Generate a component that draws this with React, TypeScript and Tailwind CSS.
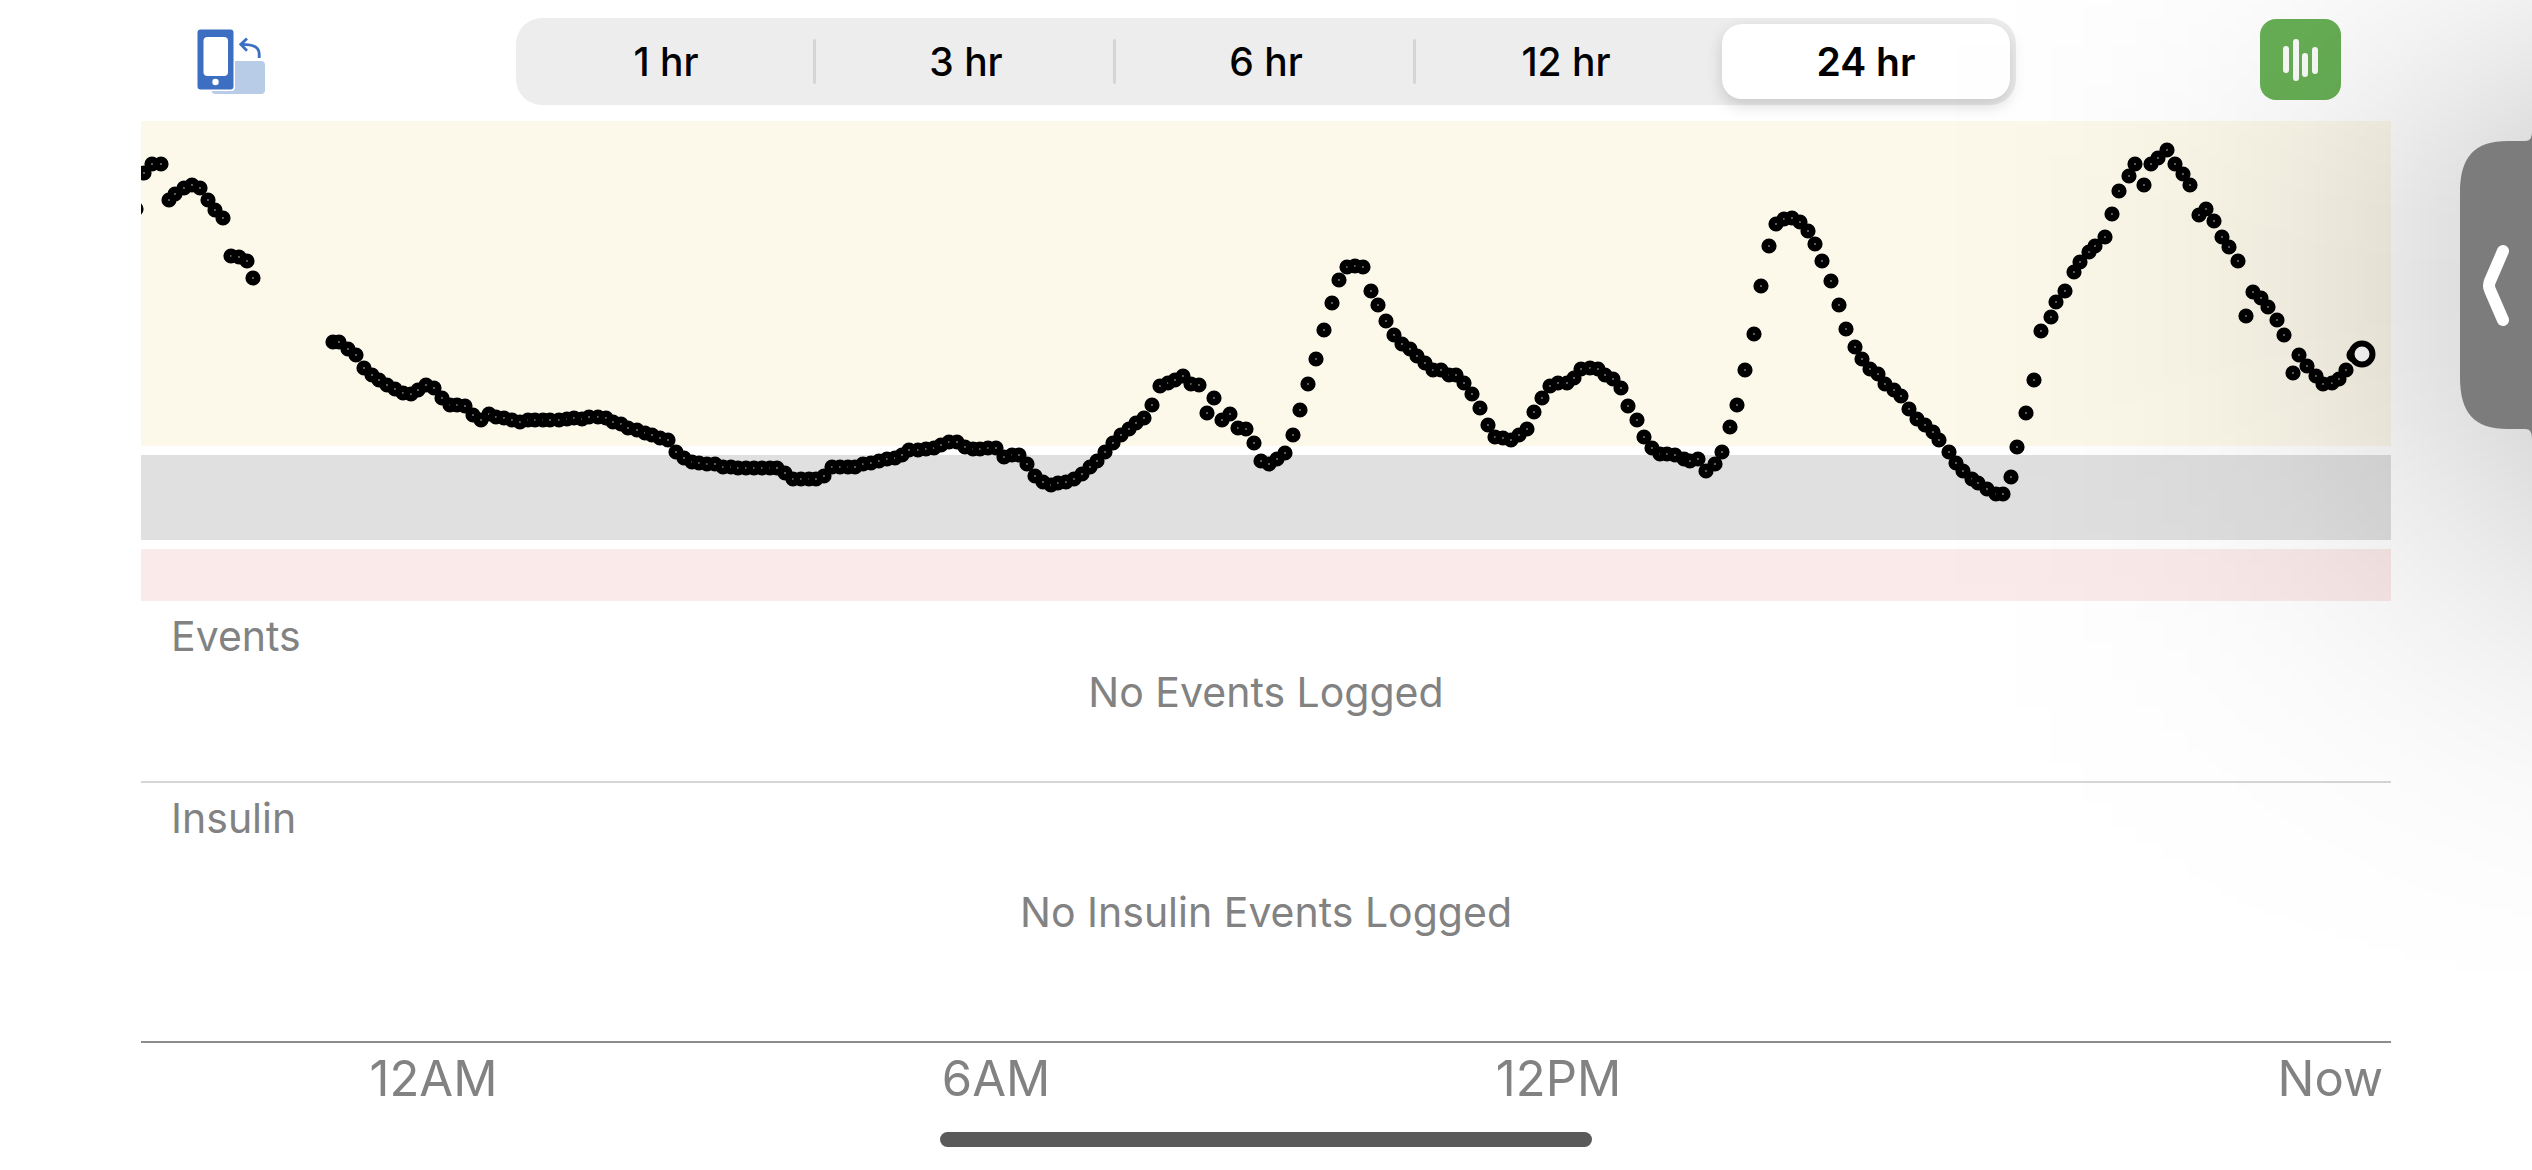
import { useState } from "react";
import clsx from "clsx";

const ranges = ["1 hr", "3 hr", "6 hr", "12 hr", "24 hr"];

// One day of readings: [position along the plot, distance from its top]
const PLOT_WIDTH = 2250;
const readings: [number, number][] = [
  [-5, 88], [3, 52], [11, 43], [20, 43], [28, 79], [34, 73], [43, 67], [51, 64],
  [59, 67], [67, 79], [74, 89], [82, 97], [90, 135], [98, 136], [106, 140], [112, 157],
  [192, 221], [198, 221], [207, 228], [215, 234], [223, 247], [231, 254], [238, 259], [246, 264],
  [254, 268], [262, 272], [270, 273], [277, 269], [285, 264], [293, 267], [301, 277], [309, 284],
  [316, 284], [324, 285], [332, 294], [340, 299], [348, 293], [355, 296], [363, 297], [371, 299],
  [379, 301], [387, 299], [394, 299], [402, 299], [409, 299], [418, 299], [426, 298], [433, 297],
  [441, 298], [448, 296], [457, 296], [465, 297], [472, 301], [480, 303], [487, 307], [496, 309],
  [504, 312], [511, 314], [519, 317], [527, 319], [535, 331], [543, 337], [551, 341], [558, 342],
  [566, 343], [574, 343], [582, 346], [590, 346], [597, 347], [605, 347], [613, 347], [621, 347],
  [629, 347], [636, 347], [644, 352], [652, 358], [660, 358], [668, 358], [675, 358], [683, 355],
  [691, 346], [699, 346], [707, 346], [714, 346], [722, 343], [730, 342], [738, 340], [746, 338],
  [754, 337], [761, 334], [768, 329], [777, 329], [785, 328], [793, 327], [800, 324], [808, 321],
  [816, 321], [824, 326], [832, 328], [839, 328], [847, 327], [855, 327], [863, 336], [871, 334],
  [878, 334], [886, 343], [894, 355], [902, 361], [910, 364], [917, 362], [925, 361], [933, 358],
  [941, 353], [949, 346], [956, 340], [964, 331], [972, 322], [980, 314], [988, 308], [995, 302],
  [1003, 297], [1011, 284], [1019, 265], [1027, 262], [1034, 259], [1042, 255], [1050, 263], [1058, 264],
  [1066, 292], [1073, 277], [1081, 299], [1089, 293], [1097, 307], [1105, 308], [1113, 322], [1120, 340],
  [1128, 343], [1136, 338], [1144, 332], [1152, 314], [1159, 289], [1167, 263], [1175, 238], [1183, 209],
  [1191, 182], [1198, 159], [1206, 146], [1214, 145], [1222, 146], [1230, 170], [1237, 184], [1245, 200],
  [1253, 214], [1261, 223], [1269, 228], [1276, 235], [1284, 242], [1292, 249], [1300, 249], [1308, 254],
  [1315, 254], [1323, 262], [1331, 273], [1339, 287], [1347, 304], [1354, 316], [1362, 317], [1370, 319],
  [1378, 314], [1386, 308], [1393, 291], [1401, 277], [1409, 265], [1417, 262], [1426, 262], [1433, 257],
  [1440, 248], [1449, 247], [1457, 248], [1464, 254], [1472, 258], [1480, 267], [1487, 285], [1496, 299],
  [1503, 316], [1511, 327], [1519, 333], [1526, 333], [1534, 334], [1543, 338], [1549, 340], [1557, 338],
  [1565, 350], [1574, 343], [1581, 331], [1589, 306], [1596, 284], [1604, 249], [1613, 213], [1620, 165],
  [1628, 125], [1635, 103], [1643, 98], [1651, 97], [1659, 101], [1667, 110], [1674, 123], [1681, 140],
  [1690, 160], [1698, 184], [1705, 208], [1714, 226], [1721, 238], [1729, 248], [1737, 253], [1744, 263],
  [1753, 269], [1760, 275], [1768, 288], [1776, 298], [1784, 304], [1792, 311], [1798, 319], [1808, 331],
  [1815, 342], [1822, 350], [1831, 358], [1837, 362], [1846, 368], [1855, 373], [1862, 373], [1870, 356],
  [1876, 326], [1885, 292], [1893, 259], [1900, 210], [1910, 196], [1915, 181], [1924, 170], [1933, 151],
  [1939, 141], [1948, 131], [1954, 125], [1964, 116], [1971, 93], [1978, 70], [1988, 55], [1994, 43],
  [2003, 64], [2010, 43], [2017, 37], [2026, 29], [2034, 43], [2042, 53], [2049, 64], [2058, 94],
  [2065, 88], [2073, 100], [2081, 116], [2088, 126], [2097, 140], [2105, 195], [2112, 171], [2120, 177],
  [2127, 186], [2136, 199], [2143, 214], [2152, 252], [2158, 234], [2166, 245], [2175, 255], [2182, 263],
  [2191, 262], [2198, 258], [2205, 249], [2213, 234],
];
const latest: [number, number] = [2221, 233];

const toPercent = (x: number) => `${(x / PLOT_WIDTH) * 100}%`;

function RotateIcon() {
  return (
    <svg width="70" height="66" viewBox="0 0 70 66" fill="none">
      <rect x="15.5" y="32" width="53.5" height="33" rx="4" fill="#b9cce7" />
      <rect x="0.5" y="-1" width="38.5" height="63" rx="4" fill="white" />
      <rect x="1.5" y="0.5" width="36" height="60" rx="3" fill="#3c6fc2" />
      <rect x="7.5" y="8" width="24.5" height="39" rx="4" fill="white" />
      <circle cx="19.5" cy="53" r="3.2" fill="white" />
      <path
        d="M63.2 29V25C63.2 18 58 15.6 46 15.4M51 9.5L44.8 15.4L51 21.7"
        stroke="#3c6fc2"
        strokeWidth="2.8"
      />
    </svg>
  );
}

function BarsIcon() {
  return (
    <svg
      width="81"
      height="81"
      viewBox="0 0 81 81"
      stroke="#fafdf9"
      strokeWidth="6"
      strokeLinecap="round"
    >
      <path d="M26 30V51M36 23V59M45 37V55M55 31V52" />
    </svg>
  );
}

function RangePicker() {
  const [active, setActive] = useState("24 hr");
  const activeIndex = ranges.indexOf(active);
  return (
    <div className="grid h-[87px] grid-cols-5 rounded-[26px] bg-[#ededed]">
      {ranges.map((range, i) => (
        <div key={range} className="flex items-center">
          <button
            type="button"
            aria-pressed={i === activeIndex}
            onClick={() => setActive(range)}
            className={clsx(
              "mx-[6px] h-[75px] flex-1 rounded-[20px] text-[39px] leading-[48px] text-black",
              i === activeIndex
                ? "bg-white font-semibold shadow-[0_6px_16px_rgba(0,0,0,0.16)]"
                : "font-medium"
            )}
          >
            {range}
          </button>
          {/* no divider on either side of the active segment */}
          {i < ranges.length - 1 && (
            <span
              className={clsx(
                "-ml-[3px] h-[45px] w-[3px] rounded-full",
                i === activeIndex || i + 1 === activeIndex
                  ? "bg-transparent"
                  : "bg-[#d5d5d5]"
              )}
            />
          )}
        </div>
      ))}
    </div>
  );
}

function GlucoseChart() {
  return (
    <section className="relative flex flex-col gap-[9px] overflow-hidden">
      <div className="h-[325px] bg-[#fcf8ea]" />
      <div className="h-[85px] bg-[#e0e0e0]" />
      <div className="h-[52px] bg-[#faeae9]" />
      <svg
        className="absolute inset-0 h-full w-full"
        role="img"
        aria-label="Glucose readings"
      >
        {readings.map(([x, y]) => (
          <circle
            key={x}
            cx={toPercent(x)}
            cy={y}
            r="4.3"
            fill="#777"
            stroke="black"
            strokeWidth="6.6"
          />
        ))}
        <circle
          cx={toPercent(latest[0])}
          cy={latest[1]}
          r="10.5"
          fill="white"
          stroke="black"
          strokeWidth="6"
        />
      </svg>
    </section>
  );
}

// Soft shade that the side panel throws over the page: fades leftwards,
// and the mask fades it above and below the handle
function PanelShade() {
  return (
    <div className="pointer-events-none absolute inset-y-0 right-0 w-[640px] bg-[linear-gradient(to_left,rgba(0,0,0,0.16)_0px,rgba(0,0,0,0.125)_72px,rgba(0,0,0,0.093)_141px,rgba(0,0,0,0.06)_232px,rgba(0,0,0,0.033)_332px,rgba(0,0,0,0.015)_432px,rgba(0,0,0,0.005)_532px,transparent_620px)] [mask-image:linear-gradient(to_bottom,rgba(0,0,0,0.36)_0px,rgba(0,0,0,0.54)_60px,rgba(0,0,0,0.8)_140px,rgba(0,0,0,0.95)_210px,black_285px,rgba(0,0,0,0.96)_360px,rgba(0,0,0,0.86)_430px,rgba(0,0,0,0.68)_510px,rgba(0,0,0,0.46)_600px,rgba(0,0,0,0.26)_700px,rgba(0,0,0,0.15)_775px,rgba(0,0,0,0.08)_850px,rgba(0,0,0,0.03)_925px,transparent_1005px)]" />
  );
}

function SideHandle() {
  return (
    <button
      type="button"
      aria-label="Open panel"
      className="absolute top-[141px] right-0"
    >
      <svg width="72" height="288" viewBox="0 0 72 288" className="overflow-visible">
        <path
          d="M72 -10C72 -3 70 0 65 0H48C14 0 0 16 0 52V236C0 272 14 288 48 288H65C70 288 72 291 72 298Z"
          fill="#7c7c7c"
        />
        <path
          d="M43 110L30 140Q28 145 30 149L43 179"
          fill="none"
          stroke="white"
          strokeWidth="12"
          strokeLinecap="round"
        />
      </svg>
    </button>
  );
}

export default function App() {
  return (
    <main className="relative overflow-hidden bg-white px-[141px] pb-[23px] font-[Inter,'Liberation_Sans',sans-serif] text-[#828282]">
      <header className="grid grid-cols-[1fr_4fr_1fr] items-center pt-[18px] pb-4">
        <button type="button" aria-label="Rotate phone" className="ml-[55px] w-fit">
          <RotateIcon />
        </button>
        <RangePicker />
        <button
          type="button"
          aria-label="Statistics"
          className="mt-px mr-[50px] w-fit self-start justify-self-end rounded-[16px] bg-[#68b056]"
        >
          <BarsIcon />
        </button>
      </header>

      <GlucoseChart />

      <section className="h-[182px] border-b-2 border-[#d6d6d6] pt-[10px] text-[41px] leading-[50px]">
        <h2 className="pl-[30px]">Events</h2>
        <p className="pt-[6px] text-center">No Events Logged</p>
      </section>

      <section className="h-[260px] border-b-2 border-[#8c8c8c] pt-[10px] text-[41px] leading-[50px]">
        <h2 className="pl-[30px]">Insulin</h2>
        <p className="pt-[44px] text-center">No Insulin Events Logged</p>
      </section>

      {/* labels sit at 13%, 38% and 63% of the plot, six hours apart */}
      <div className="grid grid-cols-[26fr_24fr_26fr_24fr] pt-[6px] text-center text-[49px] leading-[60px]">
        <span>12AM</span>
        <span>6AM</span>
        <span>12PM</span>
        <span className="pr-2 text-right">Now</span>
      </div>

      <div className="mx-auto mt-[23px] h-[15px] w-[652px] rounded-full bg-[#5a5a5a]" />

      <PanelShade />
      <SideHandle />
    </main>
  );
}
